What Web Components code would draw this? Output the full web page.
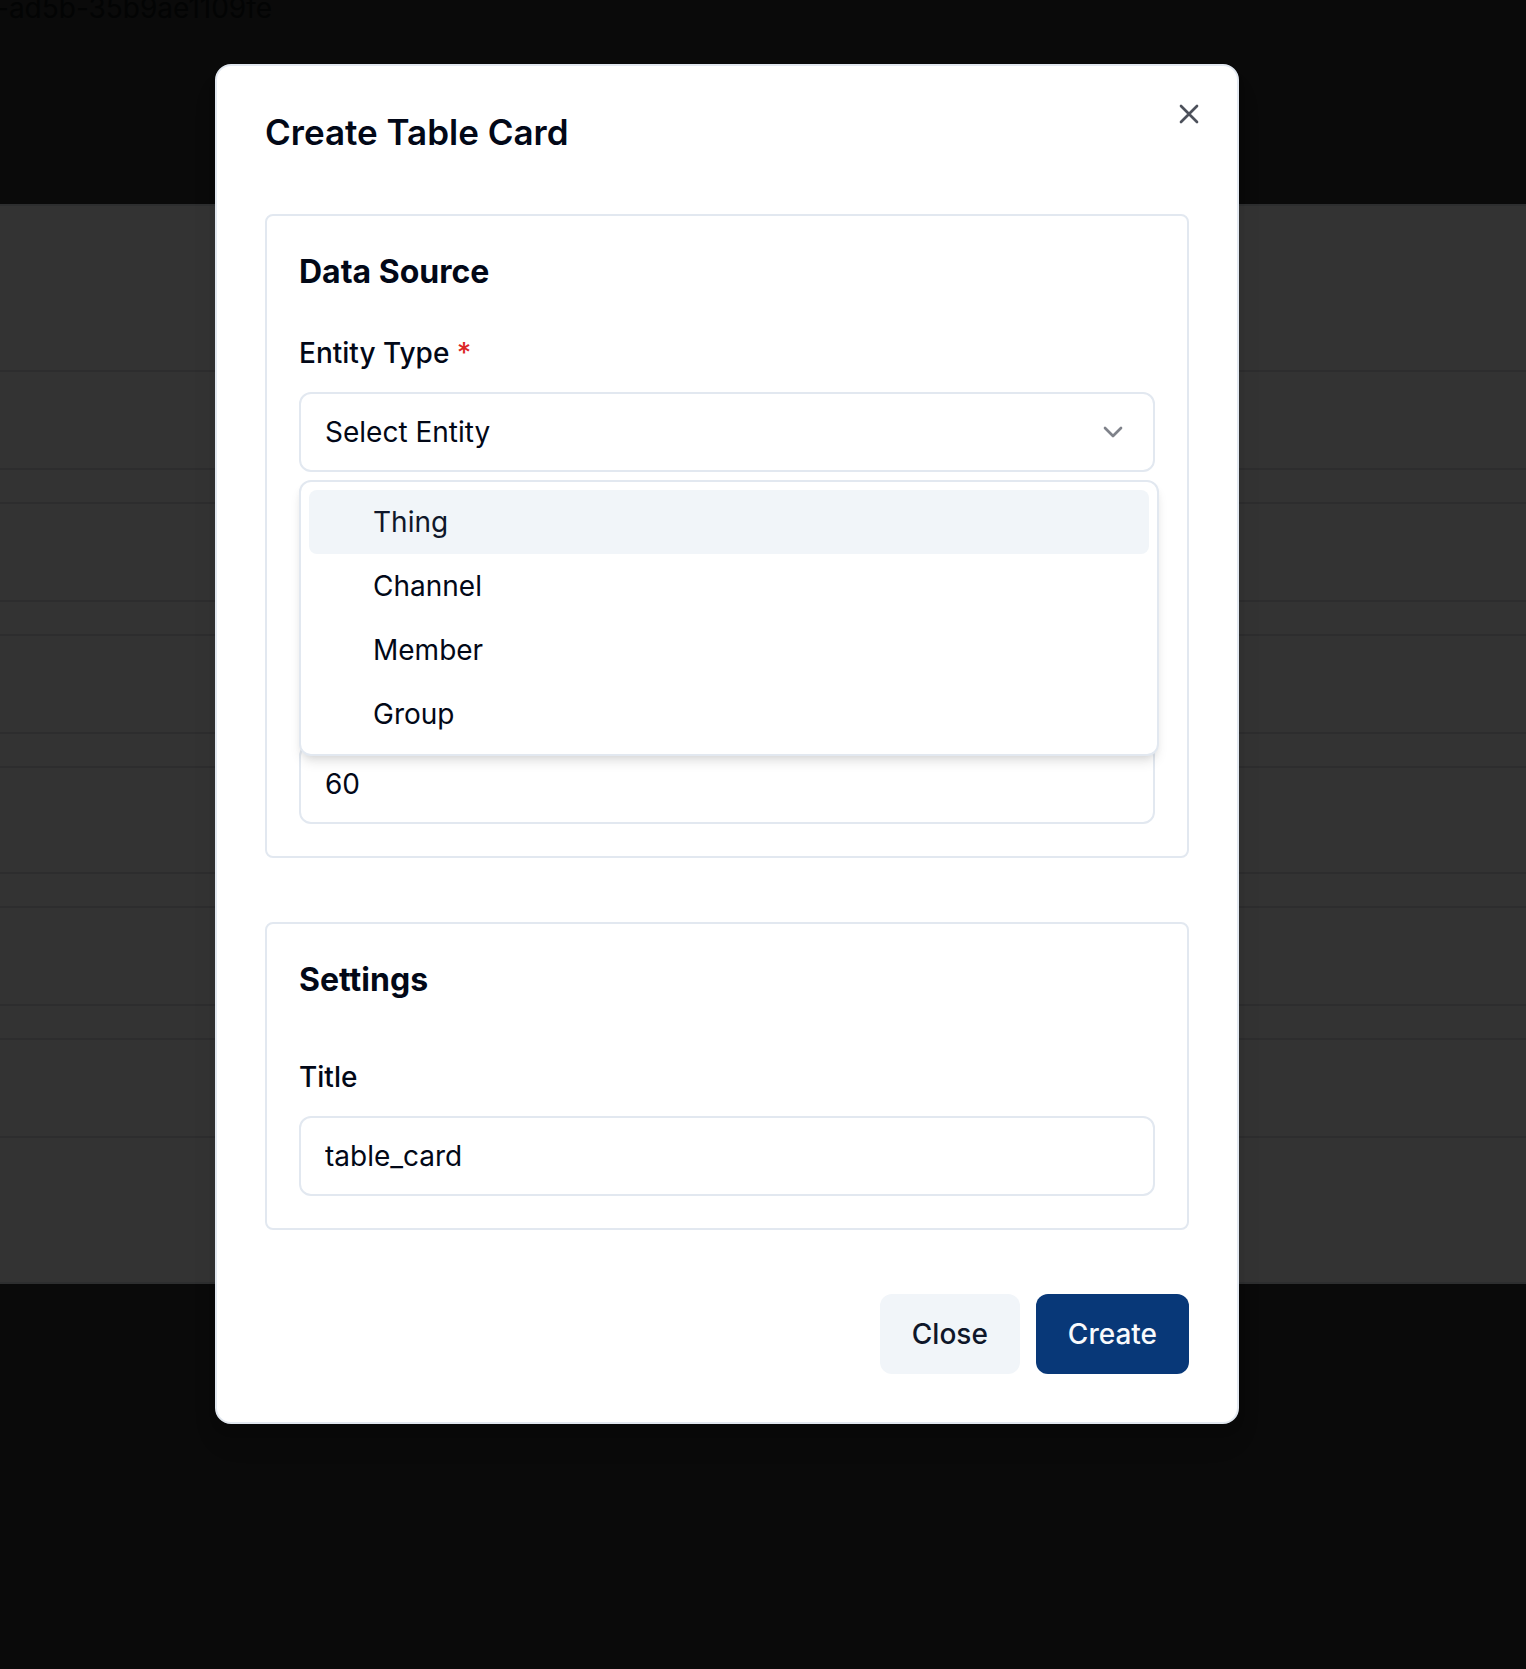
<!DOCTYPE html>
<html lang="en">
<head>
<meta charset="utf-8">
<title>Create Table Card</title>
<meta name="viewport" content="width=device-width, initial-scale=1">
<style>
  :root {
    --ink: #020817;
    --ink-soft: #0f172a;
    --line: #e2e8f0;
    --muted: #f1f5f9;
    --primary: #083878;
    --danger: #dc2626;
  }
  body {
    margin: 0;
    background: #0a0a0a;
    color: var(--ink);
    font-family: Inter, "Liberation Sans", sans-serif;
    font-size: 28px;
    line-height: 40px;
  }
</style>
</head>
<body>
<app-stage>
  <dimmed-page slot="page"></dimmed-page>
  <modal-dialog heading="Create Table Card">
    <form-card heading="Data Source">
      <entity-select label="Entity Type" placeholder="Select Entity" options="Thing,Channel,Member,Group"></entity-select>
      <text-field name="Entity"></text-field>
      <text-field name="Interval" type="number" value="60"></text-field>
    </form-card>
    <form-card heading="Settings" spacious>
      <text-field label="Title" value="table_card"></text-field>
    </form-card>
    <action-button slot="actions">Close</action-button>
    <action-button slot="actions" primary>Create</action-button>
  </modal-dialog>
</app-stage>

<script>
const reset = `
  *, *::before, *::after { box-sizing: border-box; }
  button, input, select { font: inherit; color: inherit; margin: 0; }
`;

const define = (name, template, setup) => {
  customElements.define(name, class extends HTMLElement {
    connectedCallback() {
      if (this.shadowRoot) return;
      const root = this.attachShadow({ mode: "open" });
      root.innerHTML = `<style>${reset}</style>` + template(this);
      if (setup) setup(root, this);
    }
  });
};

define("app-stage", () => `
  <style>
    :host { display: block; position: relative; min-height: 100vh; }
    .overlay {
      position: absolute; inset: 0;
      display: flex; justify-content: center; align-items: flex-start;
      padding: 64px 72px 64px 0;
    }
  </style>
  <slot name="page"></slot>
  <div class="overlay"><slot></slot></div>
`);

define("dimmed-page", () => `
  <style>
    :host { display: block; overflow: hidden; }
    header { height: 204px; line-height: 16px; text-indent: -4px; color: #030404; }
    main {
      display: flex; flex-direction: column; gap: 32px;
      padding: 164px 0 144px;
      background: #333333;
      border: solid #2d2e2f; border-width: 2px 0;
    }
    .row { height: 100px; border: solid #2d2d2e; border-width: 2px 0; }
    .tall { height: 108px; }
  </style>
  <header>-ad5b-35b9ae1109fe</header>
  <main>
    <div class="row"></div>
    <div class="row"></div>
    <div class="row"></div>
    <div class="row tall"></div>
    <div class="row"></div>
    <div class="row"></div>
  </main>
`);

define("modal-dialog", host => `
  <style>
    :host { display: block; width: 100%; max-width: 1024px; }
    section {
      position: relative;
      display: flex; flex-direction: column; gap: 64px;
      padding: 48px;
      background: #fff;
      border: 2px solid var(--line); border-radius: 16px;
      box-shadow: 0 20px 30px -6px rgb(0 0 0 / .1), 0 8px 12px -4px rgb(0 0 0 / .1);
    }
    h2 { margin: 0; font-size: 35px; line-height: 36px; font-weight: 600; }
    .close {
      position: absolute; top: 32px; right: 32px;
      display: flex; padding: 0; border: 0; background: none; opacity: .7; cursor: pointer;
    }
    footer { display: flex; justify-content: flex-end; gap: 16px; }
  </style>
  <section role="dialog" aria-labelledby="heading">
    <h2 id="heading">${host.getAttribute("heading")}</h2>
    <slot></slot>
    <footer><slot name="actions"></slot></footer>
    <button class="close" type="button" aria-label="Close dialog">
      <svg width="32" height="32" viewBox="0 0 24 24" fill="none" stroke="currentColor" stroke-width="2" stroke-linecap="round" stroke-linejoin="round"><path d="M18 6 6 18M6 6l12 12"/></svg>
    </button>
  </section>
`);

define("form-card", host => `
  <style>
    :host {
      display: flex; flex-direction: column; gap: 32px;
      padding: 32px;
      border: 2px solid var(--line); border-radius: 8px;
    }
    :host([spacious]) { gap: 48px; }
    h3 { margin: 0; font-size: 32px; line-height: 48px; font-weight: 700; }
  </style>
  <h3>${host.getAttribute("heading")}</h3>
  <slot></slot>
`);

const fieldStyle = `
  :host { display: flex; flex-direction: column; gap: 16px; }
  .label { height: 48px; font-size: 32px; line-height: 48px; }
  label { font-size: 28px; font-weight: 500; }
  input, select {
    display: block; width: 100%; height: 80px;
    padding: 0 24px;
    background: #fff;
    border: 2px solid var(--line); border-radius: 12px;
    outline: none; appearance: none;
  }
`;

define("text-field", host => {
  const label = host.getAttribute("label");
  return `
    <style>${fieldStyle}</style>
    <div class="label">${label ? `<label for="control">${label}</label>` : ""}</div>
    <input id="control" type="${host.getAttribute("type") || "text"}" value="${host.getAttribute("value") || ""}"
      ${label ? "" : `aria-label="${host.getAttribute("name")}"`}>
  `;
});

define("entity-select", host => `
  <style>
    ${fieldStyle}
    b { font-weight: 500; color: var(--danger); }
    .box { position: relative; }
    svg { position: absolute; top: 24px; right: 26px; opacity: .5; pointer-events: none; }
    ul {
      position: absolute; z-index: 1; top: calc(100% + 8px); left: 0; right: -4px;
      margin: 0; padding: 8px; list-style: none;
      background: #fff;
      border: 2px solid var(--line); border-radius: 12px;
      box-shadow: 0 8px 12px -2px rgb(0 0 0 / .1), 0 4px 8px -4px rgb(0 0 0 / .1);
    }
    li { padding: 12px 16px 12px 64px; border-radius: 8px; cursor: default; }
    li.active { background: var(--muted); color: var(--ink-soft); }
  </style>
  <div class="label"><label for="control">${host.getAttribute("label")} <b>*</b></label></div>
  <div class="box">
    <select id="control"><option>${host.getAttribute("placeholder")}</option></select>
    <svg width="32" height="32" viewBox="0 0 24 24" fill="none" stroke="currentColor" stroke-width="2" stroke-linecap="round" stroke-linejoin="round"><path d="m6 9 6 6 6-6"/></svg>
    <ul role="listbox" aria-label="${host.getAttribute("label")}">
      ${host.getAttribute("options").split(",").map((o, i) => `<li role="option"${i ? "" : ` class="active"`}>${o}</li>`).join("")}
    </ul>
  </div>
`, root => {
  const list = root.querySelector("ul");
  const select = root.querySelector("select");
  select.addEventListener("mousedown", e => { e.preventDefault(); list.style.display = ""; });
  list.addEventListener("mouseover", e => {
    if (e.target.localName !== "li") return;
    for (const item of list.children) item.classList.toggle("active", item === e.target);
  });
  list.addEventListener("click", e => {
    if (e.target.localName !== "li") return;
    select.options[0].textContent = e.target.textContent;
    list.style.display = "none";
  });
});

define("action-button", () => `
  <style>
    :host { display: block; }
    button {
      display: block; height: 80px; padding: 0 32px;
      border: 0; border-radius: 12px;
      background: var(--muted); color: var(--ink-soft);
      font-weight: 500; cursor: pointer;
    }
    :host([primary]) button { background: var(--primary); color: #f8fafc; }
  </style>
  <button type="button"><slot></slot></button>
`);
</script>
</body>
</html>
